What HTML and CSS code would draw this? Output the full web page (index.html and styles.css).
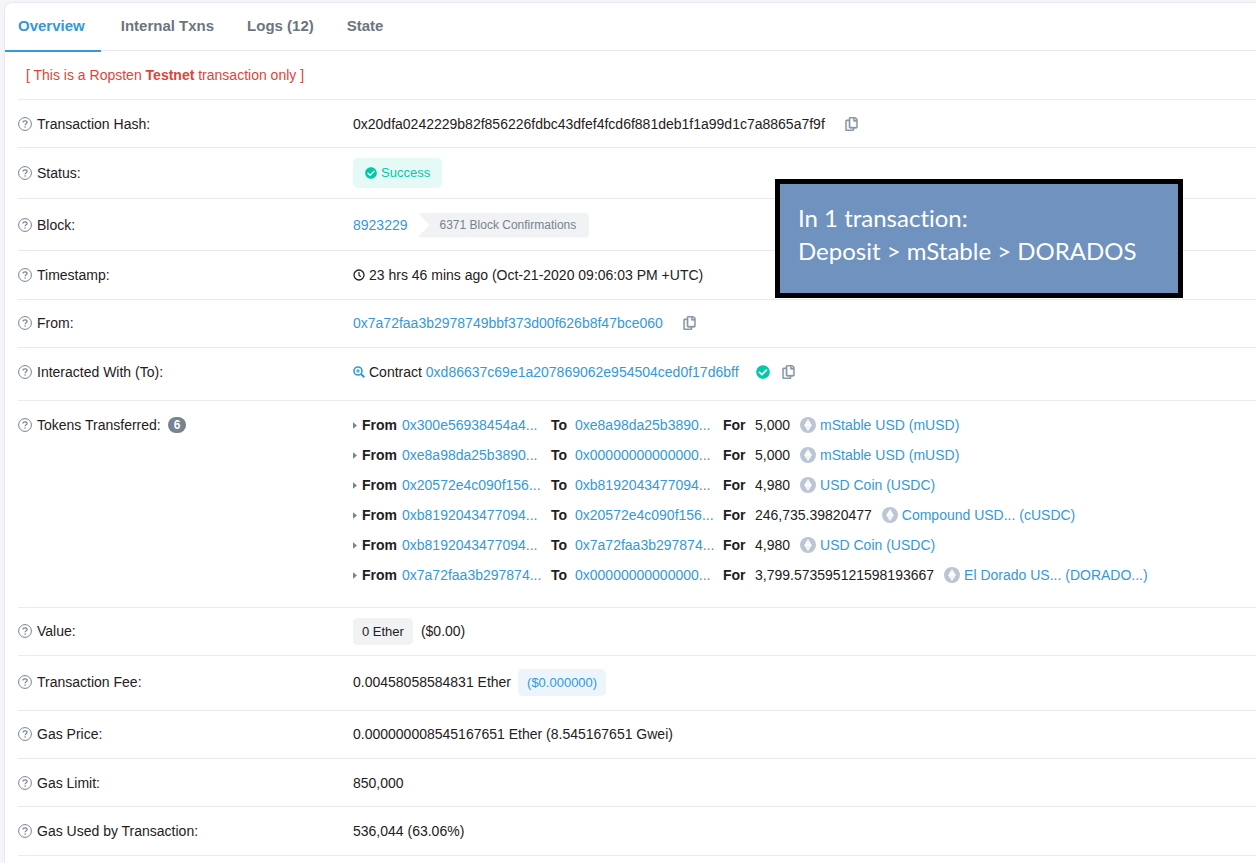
FILE: index.html
```html
<!DOCTYPE html>
<html lang="en">
<head>
<meta charset="utf-8">
<title>Transaction Details</title>
<link rel="stylesheet" href="styles.css">
</head>
<body>
<svg class="sprite" aria-hidden="true">
  <symbol id="help" viewBox="0 0 14 14"><circle cx="7" cy="7" r="6.4" fill="none" stroke="currentColor" stroke-width="1"/><path d="M5 5.6C5 4.4 5.8 3.8 7 3.8s2.1.7 2.1 1.7c0 1.4-2 1.3-2 2.8" fill="none" stroke="currentColor" stroke-width="1.2"/><circle cx="7.1" cy="10" r=".8" fill="currentColor"/></symbol>
  <symbol id="copy" viewBox="0 0 448 512"><path fill="currentColor" stroke="currentColor" stroke-width="14" d="M433.941 65.941l-51.882-51.882A48 48 0 0 0 348.118 0H176c-26.51 0-48 21.49-48 48v48H48c-26.51 0-48 21.49-48 48v320c0 26.51 21.49 48 48 48h224c26.51 0 48-21.49 48-48v-48h80c26.51 0 48-21.49 48-48V99.882a48 48 0 0 0-14.059-33.941zM266 464H54a6 6 0 0 1-6-6V150a6 6 0 0 1 6-6h74v224c0 26.51 21.49 48 48 48h96v42a6 6 0 0 1-6 6zm128-96H182a6 6 0 0 1-6-6V54a6 6 0 0 1 6-6h106v88c0 13.255 10.745 24 24 24h88v202a6 6 0 0 1-6 6zm6-256h-64V48h9.632c1.591 0 3.117.632 4.243 1.757l48.368 48.368a6 6 0 0 1 1.757 4.243V112z"/></symbol>
  <symbol id="check" viewBox="0 0 512 512"><path fill="currentColor" d="M504 256c0 136.967-111.033 248-248 248S8 392.967 8 256 119.033 8 256 8s248 111.033 248 248zM227.314 387.314l184-184c6.248-6.248 6.248-16.379 0-22.627l-22.627-22.627c-6.248-6.249-16.379-6.249-22.628 0L216 308.118l-70.059-70.059c-6.248-6.248-16.379-6.248-22.628 0l-22.627 22.627c-6.248 6.248-6.248 16.379 0 22.627l104 104c6.249 6.249 16.379 6.249 22.628.001z"/></symbol>
  <symbol id="clock" viewBox="0 0 12 12"><circle cx="6" cy="6" r="5" fill="none" stroke="currentColor" stroke-width="1.3"/><path d="M6 3v3.2l1.8 1.5" fill="none" stroke="currentColor" stroke-width="1.2"/></symbol>
  <symbol id="zoom-in" viewBox="0 0 12 12"><circle cx="5" cy="5" r="4" fill="none" stroke="currentColor" stroke-width="1.6"/><path d="M8 8l3.3 3.3" stroke="currentColor" stroke-width="2"/><path d="M5 3v4M3 5h4" stroke="currentColor" stroke-width="1.1"/></symbol>
  <symbol id="caret" viewBox="0 0 5 8"><path d="M0 0l5 4-5 4z" fill="currentColor"/></symbol>
  <symbol id="token" viewBox="0 0 16 16"><circle cx="8" cy="8" r="8" fill="#bcc5d3"/><path d="M8 2l3.8 6.2L8 14 4.2 8.2z" fill="#fff"/><path d="M4.4 8.6L8 10.6l3.6-2M8 2v12" fill="none" stroke="#dfe4eb" stroke-width=".6"/></symbol>
</svg>

<main class="card">
  <nav class="tabs" aria-label="Transaction sections">
    <a class="tab tab-active" href="#overview" aria-current="page">Overview</a>
    <a class="tab" href="#internal">Internal Txns</a>
    <a class="tab" href="#logs">Logs (12)</a>
    <a class="tab" href="#state">State</a>
  </nav>

  <section class="details" id="overview">
    <p class="notice">[ This is a Ropsten <strong>Testnet</strong> transaction only ]</p>
    <dl class="rows">
      <div class="row">
        <dt class="label"><svg class="help"><use href="#help"/></svg>Transaction Hash:</dt>
        <dd class="value"><span>0x20dfa0242229b82f856226fdbc43dfef4fcd6f881deb1f1a99d1c7a8865a7f9f</span><button class="copy" type="button" aria-label="Copy hash"><svg class="copy-icon"><use href="#copy"/></svg></button></dd>
      </div>
      <div class="row row-status">
        <dt class="label"><svg class="help"><use href="#help"/></svg>Status:</dt>
        <dd class="value"><span class="success"><svg class="icon-small"><use href="#check"/></svg>Success</span></dd>
      </div>
      <div class="row row-block">
        <dt class="label"><svg class="help"><use href="#help"/></svg>Block:</dt>
        <dd class="value"><a href="#block">8923229</a><span class="confirmations">6371 Block Confirmations</span></dd>
      </div>
      <div class="row row-time">
        <dt class="label"><svg class="help"><use href="#help"/></svg>Timestamp:</dt>
        <dd class="value"><svg class="icon-small icon-lead"><use href="#clock"/></svg>23 hrs 46 mins ago (Oct-21-2020 09:06:03 PM +UTC)</dd>
      </div>
      <div class="row row-from">
        <dt class="label"><svg class="help"><use href="#help"/></svg>From:</dt>
        <dd class="value"><a href="#from">0x7a72faa3b2978749bbf373d00f626b8f47bce060</a><button class="copy" type="button" aria-label="Copy sender address"><svg class="copy-icon"><use href="#copy"/></svg></button></dd>
      </div>
      <div class="row row-contract">
        <dt class="label"><svg class="help"><use href="#help"/></svg>Interacted With (To):</dt>
        <dd class="value"><svg class="icon-small icon-lead icon-blue"><use href="#zoom-in"/></svg><span>Contract <a href="#contract">0xd86637c69e1a207869062e954504ced0f17d6bff</a></span><svg class="verified"><use href="#check"/></svg><button class="copy copy-near" type="button" aria-label="Copy contract address"><svg class="copy-icon"><use href="#copy"/></svg></button></dd>
      </div>
      <div class="row row-tokens">
        <dt class="label"><svg class="help"><use href="#help"/></svg>Tokens Transferred:<span class="count">6</span></dt>
        <dd>
          <ul class="transfers">
            <li class="transfer"><svg class="caret"><use href="#caret"/></svg><b>From</b><a href="#a">0x300e56938454a4...</a><b>To</b><a href="#b">0xe8a98da25b3890...</a><b>For</b><span class="amount">5,000<svg class="token"><use href="#token"/></svg><a href="#musd">mStable USD (mUSD)</a></span></li>
            <li class="transfer"><svg class="caret"><use href="#caret"/></svg><b>From</b><a href="#b">0xe8a98da25b3890...</a><b>To</b><a href="#zero">0x00000000000000...</a><b>For</b><span class="amount">5,000<svg class="token"><use href="#token"/></svg><a href="#musd">mStable USD (mUSD)</a></span></li>
            <li class="transfer"><svg class="caret"><use href="#caret"/></svg><b>From</b><a href="#c">0x20572e4c090f156...</a><b>To</b><a href="#d">0xb8192043477094...</a><b>For</b><span class="amount">4,980<svg class="token"><use href="#token"/></svg><a href="#usdc">USD Coin (USDC)</a></span></li>
            <li class="transfer"><svg class="caret"><use href="#caret"/></svg><b>From</b><a href="#d">0xb8192043477094...</a><b>To</b><a href="#c">0x20572e4c090f156...</a><b>For</b><span class="amount">246,735.39820477<svg class="token"><use href="#token"/></svg><a href="#cusdc">Compound USD... (cUSDC)</a></span></li>
            <li class="transfer"><svg class="caret"><use href="#caret"/></svg><b>From</b><a href="#d">0xb8192043477094...</a><b>To</b><a href="#e">0x7a72faa3b297874...</a><b>For</b><span class="amount">4,980<svg class="token"><use href="#token"/></svg><a href="#usdc">USD Coin (USDC)</a></span></li>
            <li class="transfer"><svg class="caret"><use href="#caret"/></svg><b>From</b><a href="#e">0x7a72faa3b297874...</a><b>To</b><a href="#zero">0x00000000000000...</a><b>For</b><span class="amount">3,799.573595121598193667<svg class="token"><use href="#token"/></svg><a href="#dorado">El Dorado US... (DORADO...)</a></span></li>
          </ul>
        </dd>
      </div>
      <div class="row row-from">
        <dt class="label"><svg class="help"><use href="#help"/></svg>Value:</dt>
        <dd class="value"><span class="chip">0 Ether</span><span class="fiat">($0.00)</span></dd>
      </div>
      <div class="row row-fee">
        <dt class="label"><svg class="help"><use href="#help"/></svg>Transaction Fee:</dt>
        <dd class="value">0.00458058584831 Ether<span class="chip chip-blue">($0.000000)</span></dd>
      </div>
      <div class="row row-from">
        <dt class="label"><svg class="help"><use href="#help"/></svg>Gas Price:</dt>
        <dd class="value">0.000000008545167651 Ether (8.545167651 Gwei)</dd>
      </div>
      <div class="row">
        <dt class="label"><svg class="help"><use href="#help"/></svg>Gas Limit:</dt>
        <dd class="value">850,000</dd>
      </div>
      <div class="row row-time">
        <dt class="label"><svg class="help"><use href="#help"/></svg>Gas Used by Transaction:</dt>
        <dd class="value">536,044 (63.06%)</dd>
      </div>
    </dl>
  </section>
</main>

<aside class="callout">In 1 transaction:<br>Deposit &gt; mStable &gt; DORADOS</aside>
</body>
</html>
```

FILE: styles.css
```css
* {
  box-sizing: border-box;
}

html {
  overflow: hidden;
}

body {
  margin: 0;
  padding: 2px 0 0 4px;
  background: #f4f5f9;
  color: #1e2022;
  font: 14px/24px "Liberation Sans", Arial, sans-serif;
}

a {
  color: #3498db;
  text-decoration: none;
}

svg {
  display: block;
  flex: none;
}

.sprite {
  position: absolute;
  width: 0;
  height: 0;
}

.card {
  min-height: 100vh;
  background: #fff;
  border: 1px solid #e7eaf3;
  border-right: 0;
  border-radius: 8px 0 0 0;
}

.tabs {
  display: flex;
  gap: 7px;
  height: 48px;
  border-bottom: 1px solid #e7eaf3;
}

.tab {
  height: 49px;
  padding: 11px 13px 0;
  color: #6c757e;
  font-size: 15px;
  font-weight: bold;
}

.tab-active {
  padding-right: 16px;
  border-bottom: 2px solid #3498db;
  color: #3498db;
}

.details {
  margin-left: 13px;
}

.notice {
  margin: 0;
  padding: 12px 8px;
  border-bottom: 1px solid #e9ecf2;
  color: #de4437;
}

.rows {
  margin: 0;
}

.rows dd {
  margin: 0;
}

.row {
  display: grid;
  grid-template-columns: 335px 1fr;
  padding: 12px 0 11px;
  border-bottom: 1px solid #e7eaf3;
}

.label,
.value {
  display: flex;
  align-items: center;
  height: 24px;
  white-space: nowrap;
}

.row-status {
  padding: 13px 0;
}

.row-block {
  padding: 14px 0 13px;
}

.row-time {
  padding: 12px 0;
}

.row-from {
  padding: 11px 0 12px;
}

.row-contract {
  padding: 12px 0 16px;
}

.row-tokens {
  padding: 9px 0 17px;
}

.row-tokens .label {
  height: 30px;
}

.row-fee {
  padding: 14px 0 16px;
}

.help {
  width: 14px;
  height: 14px;
  margin-right: 5px;
  color: #77838f;
}

.copy {
  margin-left: 20px;
  padding: 0;
  border: 0;
  background: none;
  color: #8c98a4;
}

.copy-near {
  margin-left: 12px;
}

.copy-icon {
  width: 13px;
  height: 14px;
}

.success {
  display: flex;
  align-items: center;
  gap: 4px;
  height: 30px;
  padding: 0 12px;
  border-radius: 5px;
  background: #e5f9f6;
  color: #00c9a7;
  font-size: 13px;
}

.icon-small {
  width: 12px;
  height: 12px;
}

.icon-lead {
  margin-right: 4px;
}

.icon-blue {
  color: #3498db;
}

.verified {
  width: 14px;
  height: 14px;
  margin-left: 17px;
  color: #00c9a7;
}

.confirmations {
  height: 25px;
  margin-left: 10px;
  padding: 0 13px 0 22px;
  border-radius: 4px;
  background: #f1f2f4;
  clip-path: polygon(0 0, 100% 0, 100% 100%, 0 100%, 12px 50%);
  color: #77838f;
  font-size: 12px;
  line-height: 25px;
}

.count {
  margin-left: 7px;
  padding: 0 6px;
  border-radius: 8px;
  background: #77838f;
  color: #fff;
  font-size: 12px;
  font-weight: bold;
  line-height: 16px;
}

.transfers {
  margin: 0;
  padding: 0;
  list-style: none;
}

.transfer {
  display: grid;
  grid-template-columns: 9px 40px 149px 24px 148px 32px 1fr;
  align-items: center;
  height: 30px;
  white-space: nowrap;
}

.caret {
  width: 4px;
  height: 7px;
  color: #77838f;
}

.amount {
  display: flex;
  align-items: center;
}

.token {
  width: 16px;
  height: 16px;
  margin: 0 4px 0 10px;
}

.chip {
  height: 27px;
  padding: 0 9px;
  border-radius: 5px;
  background: #f1f2f4;
  font-size: 13px;
  line-height: 27px;
}

.chip-blue {
  margin-left: 7px;
  background: #ebf5fb;
  color: #3498db;
}

.fiat {
  margin-left: 8px;
}

.callout {
  position: absolute;
  top: 179px;
  left: 775px;
  width: 408px;
  height: 119px;
  padding: 17px 18px;
  border: 5px solid #000;
  background: #6f92be;
  color: #fff;
  font: 24px/33px Lato, sans-serif;
  font-variant-ligatures: none;
}
```
